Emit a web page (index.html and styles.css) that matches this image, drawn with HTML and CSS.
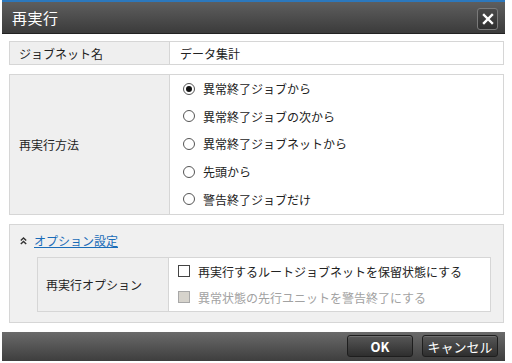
FILE: index.html
```html
<!DOCTYPE html>
<html lang="ja">
<head>
    <meta charset="UTF-8">
    <title>再実行</title>
    <link rel="stylesheet" href="styles.css">
</head>
<body>

    <div class="dialog">
        <!-- Title bar -->
        <div class="titlebar">
            <span class="title">再実行</span>
            <button class="close-btn" aria-label="閉じる">
                <svg width="12" height="12" viewBox="0 0 12 12"><path d="M2 2 L10 10 M10 2 L2 10" stroke="#fff" stroke-width="2.4" stroke-linecap="square"/></svg>
            </button>
        </div>

        <div class="content">
            <!-- Jobnet name -->
            <div class="form-table">
                <div class="label-cell row-name">ジョブネット名</div>
                <div class="value-cell">データ集計</div>
            </div>

            <!-- Rerun method -->
            <div class="form-table">
                <div class="label-cell">再実行方法</div>
                <div class="value-cell radio-list">
                    <label class="radio-item"><span class="radio checked"></span>異常終了ジョブから</label>
                    <label class="radio-item"><span class="radio"></span>異常終了ジョブの次から</label>
                    <label class="radio-item"><span class="radio"></span>異常終了ジョブネットから</label>
                    <label class="radio-item"><span class="radio"></span>先頭から</label>
                    <label class="radio-item"><span class="radio"></span>警告終了ジョブだけ</label>
                </div>
            </div>

            <!-- Options -->
            <div class="options">
                <div class="options-head">
                    <svg class="collapse-icon" width="7" height="8" viewBox="0 0 7 8"><path d="M0.8 3.6 L3.5 1 L6.2 3.6 M0.8 7 L3.5 4.4 L6.2 7" fill="none" stroke="#333" stroke-width="1.4"/></svg>
                    <a href="#" class="options-link">オプション設定</a>
                </div>
                <div class="form-table inner">
                    <div class="label-cell opt-label">再実行オプション</div>
                    <div class="value-cell check-list">
                        <label class="check-item"><span class="checkbox"></span>再実行するルートジョブネットを保留状態にする</label>
                        <label class="check-item disabled"><span class="checkbox"></span>異常状態の先行ユニットを警告終了にする</label>
                    </div>
                </div>
            </div>
        </div>

        <!-- Footer -->
        <div class="footer">
            <button class="dlg-btn ok-btn">OK</button>
            <button class="dlg-btn cancel-btn">キャンセル</button>
        </div>
    </div>

</body>
</html>
```

FILE: styles.css
```css
body {
    margin: 0;
    background-color: #fff;
    font-family: "Noto Sans CJK JP", "DejaVu Sans", sans-serif;
    font-size: 12px;
    color: #222;
}
.dialog {
    width: 503px;
    margin-left: 2px;
}
.titlebar {
    height: 31px;
    border-top: 2px solid #2c78bd;
    background: linear-gradient(#5e5e5e, #3b3b3b);
    border-bottom: 1px solid #222;
    display: flex;
    align-items: center;
    justify-content: space-between;
    padding: 0 7px 0 10px;
}
.title {
    color: #fff;
    font-size: 15px;
    letter-spacing: 0.5px;
}
.close-btn {
    width: 21px;
    height: 22px;
    padding: 0;
    border: 1px solid #7a7a7a;
    border-radius: 3px;
    background: linear-gradient(#4a4a4a, #303030);
    display: flex;
    align-items: center;
    justify-content: center;
    margin-top: 2px;
}
.content {
    padding: 7px 1px 9px 7px;
    display: flex;
    flex-direction: column;
    gap: 9px;
}
.form-table {
    display: flex;
    border: 1px solid #d6d6d6;
}
.label-cell {
    width: 150px;
    padding-left: 9px;
    background-color: #efefef;
    border-right: 1px solid #d6d6d6;
    display: flex;
    align-items: center;
}
.row-name {
    height: 22px;
}
.value-cell {
    flex: 1;
    background-color: #fff;
    padding-left: 10px;
    display: flex;
    align-items: center;
}
.radio-list {
    flex-direction: column;
    align-items: flex-start;
    padding: 0 0 1px 13px;
}
.radio-item {
    height: 27.6px;
    display: flex;
    align-items: center;
}
.radio {
    width: 10px;
    height: 10px;
    border: 1px solid #555;
    border-radius: 50%;
    margin-right: 8px;
    display: flex;
    align-items: center;
    justify-content: center;
}
.radio.checked::after {
    content: "";
    width: 6px;
    height: 6px;
    border-radius: 50%;
    background-color: #111;
}
.options {
    border: 1px solid #d6d6d6;
    background-color: #f0f0f0;
    padding: 0 12px 10px 27px;
}
.options-head {
    height: 32px;
    display: flex;
    align-items: center;
    margin-left: -17px;
}
.collapse-icon {
    margin-right: 7px;
}
.options-link {
    color: #1a6cb8;
    text-decoration: underline;
}
.inner {
    height: 53px;
}
.opt-label {
    width: 122px;
    padding-left: 8px;
}
.check-list {
    flex-direction: column;
    align-items: flex-start;
    justify-content: center;
    padding-left: 9px;
}
.check-item {
    height: 26px;
    display: flex;
    align-items: center;
}
.checkbox {
    width: 10px;
    height: 10px;
    border: 1px solid #444;
    background-color: #fff;
    margin-right: 8px;
}
.check-item.disabled {
    color: #a2a2a2;
}
.check-item.disabled .checkbox {
    border-color: #a8a8a8;
    background-color: #d6d3cc;
}
.footer {
    height: 29px;
    background: linear-gradient(#6a6a6a, #3e3e3e);
    display: flex;
    align-items: center;
    justify-content: flex-end;
    gap: 9px;
    padding-right: 7px;
}
.dlg-btn {
    height: 22px;
    padding: 0;
    border: 1px solid #1e1e1e;
    border-radius: 3px;
    background: linear-gradient(#575757, #2e2e2e);
    color: #fff;
    font-family: "Noto Sans CJK JP", "DejaVu Sans", sans-serif;
    font-size: 13px;
    font-weight: bold;
    box-shadow: inset 0 1px 0 rgba(255, 255, 255, 0.15);
}
.ok-btn {
    width: 66px;
}
.cancel-btn {
    width: 76px;
    font-weight: normal;
}
```
